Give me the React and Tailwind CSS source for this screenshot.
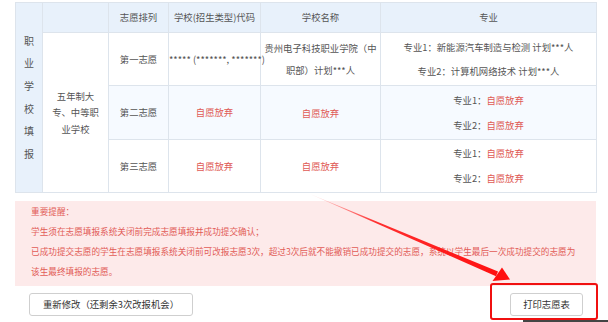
import React from "react";

const majors = [
  { order: "第一志愿", code: "***** (*******, *******)", school: true },
  { order: "第二志愿" },
  { order: "第三志愿" },
];

const Red = ({ children }) => <span className="text-[#e05a55]">{children}</span>;

const App = () => {
  return (
    <div
      className="relative w-[608px] h-[322px] overflow-hidden bg-white text-[#555] [text-spacing-trim:space-all]"
      style={{ fontFamily: '"Noto Sans CJK SC", "Liberation Sans", sans-serif' }}
    >
      <div className="pl-[15px] pt-[2px] w-[597px]">
        {/* volunteer table */}
        <table className="w-[581px] table-fixed border-collapse text-[9.36px] text-center">
          <colgroup>
            <col className="w-[27px]" />
            <col className="w-[66px]" />
            <col className="w-[60px]" />
            <col className="w-[92px]" />
            <col className="w-[120px]" />
            <col className="w-[216px]" />
          </colgroup>
          <tbody>
            <tr className="h-[30px] bg-[#e8f1fb]">
              <td rowSpan={4} className="border border-[#dde4ec] bg-[#e8f1fb] align-middle">
                <div className="flex flex-col items-center text-[10px] text-[#555]">
                  {"职业学校填报".split("").map((c) => (
                    <span key={c} className="leading-[22.6px]">{c}</span>
                  ))}
                </div>
              </td>
              <td className="border border-[#dde4ec]"></td>
              <td className="border border-[#dde4ec]">志愿排列</td>
              <td className="border border-[#dde4ec]">学校(招生类型)代码</td>
              <td className="border border-[#dde4ec]">学校名称</td>
              <td className="border border-[#dde4ec]">专业</td>
            </tr>
            {majors.map((row, i) => (
              <tr
                key={row.order}
                className={i === 1 ? "h-[54px] bg-[#f6faff]" : "h-[53px] bg-white"}
              >
                {i === 0 && (
                  <td rowSpan={3} className="border border-[#dde4ec] bg-white px-[6px] leading-[16.5px]">
                    五年制大专、中等职业学校
                  </td>
                )}
                <td className="border border-[#dde4ec]">{row.order}</td>
                <td className="border border-[#dde4ec] whitespace-nowrap">
                  {row.code ? row.code : <Red>自愿放弃</Red>}
                </td>
                <td className="border border-[#dde4ec] px-[1px] leading-[22px]">
                  {row.school ? "贵州电子科技职业学院（中职部）计划***人" : <Red>自愿放弃</Red>}
                </td>
                <td className="border border-[#dde4ec]">
                  {row.school ? (
                    <div className="flex flex-col gap-[3px] leading-[21px]">
                      <p>专业1：新能源汽车制造与检测 计划***人</p>
                      <p>专业2：计算机网络技术 计划***人</p>
                    </div>
                  ) : (
                    <div className="flex flex-col gap-[4px] leading-[21px]">
                      <p>专业1：<Red>自愿放弃</Red></p>
                      <p>专业2：<Red>自愿放弃</Red></p>
                    </div>
                  )}
                </td>
              </tr>
            ))}
          </tbody>
        </table>

        {/* notice */}
        <div className="mt-[8px] w-[581px] h-[85px] bg-[#fdeaea] px-[16px] pt-[0px] text-[8.64px] leading-[20px] text-[#e25c57]">
          <p>重要提醒：</p>
          <p>学生须在志愿填报系统关闭前完成志愿填报并成功提交确认；</p>
          <p>
            已成功提交志愿的学生在志愿填报系统关闭前可改报志愿3次，超过3次后就不能撤销已成功提交的志愿，系统以学生最后一次成功提交的志愿为该生最终填报的志愿。
          </p>
        </div>

        {/* actions */}
        <div className="mt-[7px] w-[581px] flex justify-between px-[14px] pr-[13px]">
          <button
            type="button"
            className="w-[164px] h-[23px] border border-[#cfcfcf] rounded-[3px] bg-white text-[9.36px] text-[#333]"
          >
            重新修改（还剩余3次改报机会）
          </button>
          <button
            type="button"
            className="w-[73px] h-[23px] border border-[#cfcfcf] rounded-[3px] bg-white text-[9.36px] text-[#333]"
          >
            打印志愿表
          </button>
        </div>
      </div>

      {/* annotation: red box + arrow */}
      <div className="absolute left-[490px] top-[283px] w-[108px] h-[37px] border-[2.5px] border-[#f01010] rounded-[3px]" />
      <div className="absolute left-[523px] top-[320px] w-[85px] h-[2px] bg-[#444]" />
      <svg className="absolute inset-0 pointer-events-none" width="608" height="322">
        <defs>
          <linearGradient id="fade" x1="310" y1="194" x2="500" y2="275" gradientUnits="userSpaceOnUse">
            <stop offset="0" stopColor="#ff2a2a" stopOpacity="0.1" />
            <stop offset="0.35" stopColor="#ff1a1a" stopOpacity="0.9" />
            <stop offset="1" stopColor="#ff1010" />
          </linearGradient>
        </defs>
        <polygon points="310,194 496,276.2 498,271.6" fill="url(#fade)" />
        <polygon points="510,279.5 502,267.5 492.5,281" fill="#ff1010" />
      </svg>
    </div>
  );
};

export default App;
